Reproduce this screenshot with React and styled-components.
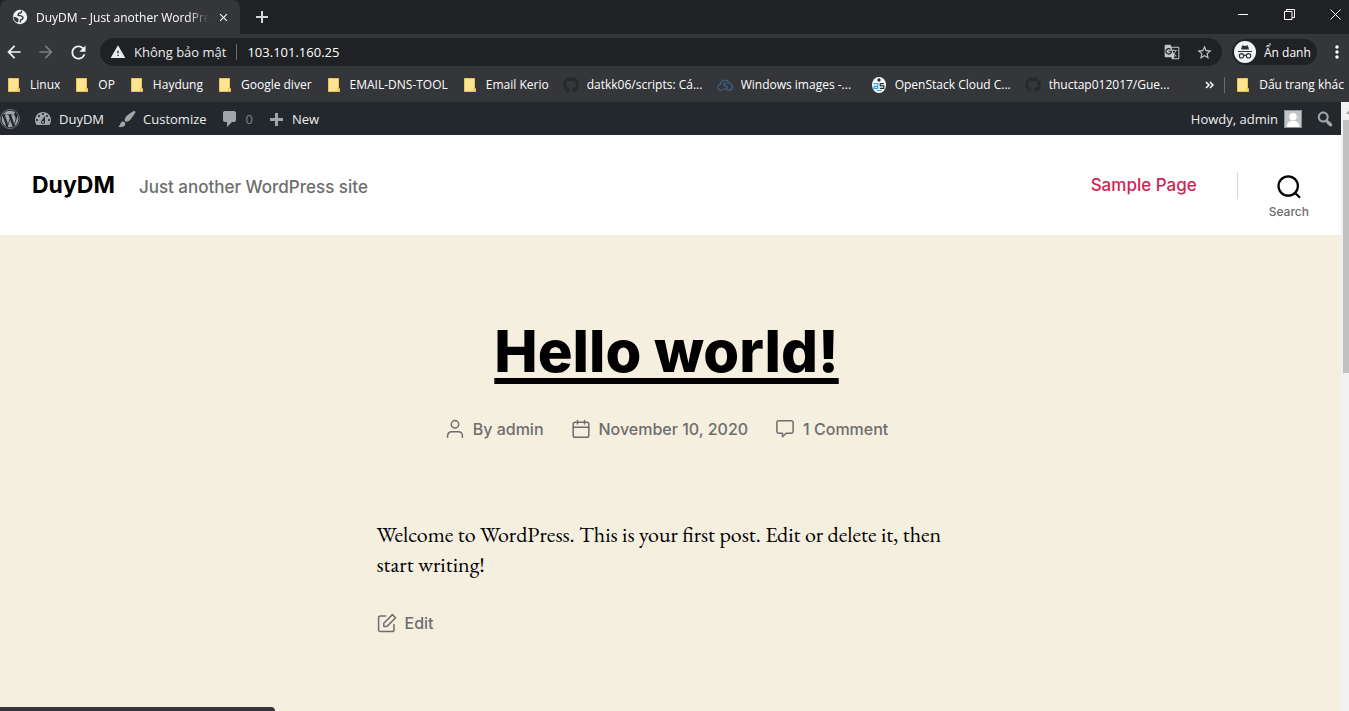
import React from "react";
import styled, { createGlobalStyle } from "styled-components";
import { FaGithub, FaWordpress } from "react-icons/fa";
import { MdArrowBack, MdArrowForward, MdRefresh, MdWarning, MdStarBorder, MdGTranslate, MdMoreVert, MdClose } from "react-icons/md";

const uiFont = '"Open Sans", "Noto Sans", sans-serif';
const themeFont = 'Inter, "Liberation Sans", sans-serif';

const GlobalStyle = createGlobalStyle`
  *, *::before, *::after { box-sizing: border-box; }
  body { margin: 0; background: #f5efe0; font-family: ${uiFont}; }
  button { font: inherit; color: inherit; background: none; border: 0; padding: 0; margin: 0; cursor: pointer; }
  a { color: inherit; text-decoration: none; }
  h1, h2, p, ul { margin: 0; padding: 0; }
  ul { list-style: none; }
  svg { display: block; flex: none; }
`;

const Window = styled.div`
  display: flex;
  flex-direction: column;
  height: 100vh;
  overflow: hidden;
  position: relative;
`;

/* ---------- browser chrome ---------- */

const TabStrip = styled.div`
  display: flex;
  flex: none;
  height: 34px;
  background: #202124;
  color: #fff;
`;

const Tab = styled.div`
  display: flex;
  align-items: center;
  width: 240px;
  padding: 0 10px 0 12px;
  gap: 8px;
  background: #35363a;
  border-radius: 8px 8px 0 0;
  font-size: 12px;
`;

const TabTitle = styled.span`
  flex: 1;
  min-width: 0;
  overflow: hidden;
  white-space: nowrap;
  mask-image: linear-gradient(to right, #000 88%, transparent);
`;

const NewTab = styled.button`
  display: grid;
  place-items: center;
  width: 44px;
`;

const WindowControls = styled.div`
  display: flex;
  margin-left: auto;
  margin-right: -9px;
`;

const WindowButton = styled.button`
  display: grid;
  place-items: center;
  width: 46px;
  height: 29px;
`;

const Toolbar = styled.div`
  display: flex;
  flex: none;
  align-items: center;
  height: 36px;
  padding: 0 2px 0 4px;
  background: #35363a;
  color: #fff;
`;

const NavButton = styled.button`
  display: grid;
  place-items: center;
  width: 20px;
  height: 28px;
  margin-right: 12px;
  color: ${(p) => (p.$dim ? "#7c7d80" : "#f1f3f4")};
`;

const AddressBar = styled.div`
  display: flex;
  flex: 1;
  align-items: center;
  height: 28px;
  padding: 0 9px 0 10px;
  border-radius: 14px;
  background: #202124;
  font-size: 13px;
`;

const Security = styled.button`
  display: flex;
  align-items: center;
  gap: 8px;
  padding-right: 10px;
  border-right: 1px solid #6b6c6f;
  line-height: 16px;
  color: #e8eaed;
  white-space: nowrap;
`;

const Address = styled.input`
  flex: 1;
  min-width: 0;
  border: 0;
  outline: 0;
  padding: 0 10px;
  background: transparent;
  color: #fff;
  font: inherit;
`;

const AddressAction = styled.button`
  margin-left: 16px;
  color: #c4c5c8;
`;

const Profile = styled.button`
  display: flex;
  align-items: center;
  gap: 8px;
  width: 85px;
  height: 26px;
  margin: 0 10px;
  padding: 0 2px;
  border-radius: 13px;
  background: #202124;
  font-size: 12px;
  white-space: nowrap;
`;

const Bookmarks = styled.nav`
  display: flex;
  flex: none;
  align-items: center;
  height: 32px;
  padding: 0 5px 3px 6px;
  background: #35363a;
  color: #fff;
  font-size: 12px;
  line-height: 16px;
`;

const BookmarkLink = styled.a`
  display: flex;
  flex: none;
  align-items: center;
  gap: 8px;
  width: ${(p) => (p.$clipped ? "154px" : "auto")};
  padding-right: ${(p) => (p.$last || p.$clipped ? "0" : "14px")};
  white-space: nowrap;
`;

const BookmarkText = styled.span`
  overflow: hidden;
  text-overflow: ellipsis;
`;

const Overflow = styled.button`
  margin-left: auto;
  margin-right: 10px;
`;

const OtherBookmarks = styled.div`
  display: flex;
  padding-left: 10px;
  border-left: 1px solid #6b6c6f;
`;

/* ---------- web page ---------- */

const Viewport = styled.div`
  display: flex;
  flex: 1;
  min-height: 0;
`;

const Site = styled.div`
  display: flex;
  flex: 1;
  flex-direction: column;
  min-width: 0;
`;

const AdminBar = styled.nav`
  display: flex;
  flex: none;
  align-items: center;
  height: 33px;
  padding-right: 6px;
  background: #23282d;
  color: #eee;
  font-size: 13px;
`;

const AdminLink = styled.a`
  display: flex;
  align-items: center;
  gap: 6px;
  margin-right: 13px;
  color: ${(p) => (p.$dim ? "#7d8287" : "#eee")};
  white-space: nowrap;
  svg { color: #a0a5aa; }
`;

const Account = styled(AdminLink)`
  margin-left: auto;
`;

const AdminSearch = styled.button`
  color: #a0a5aa;
`;

const SiteHeader = styled.header`
  display: flex;
  flex: none;
  align-items: center;
  height: 100px;
  padding: 0 32px;
  background: #fff;
  font-family: ${themeFont};
`;

const Brand = styled.div`
  display: flex;
  align-items: baseline;
  gap: 24px;
`;

const SiteTitle = styled.a`
  color: #000;
  font-size: 23px;
  font-weight: 700;
  line-height: 28px;
`;

const Tagline = styled.p`
  color: #6d6d6d;
  font-size: 17px;
  font-weight: 500;
`;

const MenuLink = styled.a`
  margin-left: auto;
  padding-right: 40px;
  color: #cd2653;
  font-size: 17px;
  font-weight: 500;
  line-height: 27px;
  border-right: 1px solid #dcd7ca;
`;

const SearchToggle = styled.button`
  display: flex;
  flex-direction: column;
  align-items: center;
  gap: 5px;
  margin-left: 31px;
  padding-top: 24px;
  color: #6d6d6d;
  font-size: 12px;
  font-weight: 500;
  line-height: 16px;
  svg { color: #000; }
`;

const Post = styled.article`
  display: flex;
  flex: 1;
  flex-direction: column;
  align-items: center;
  min-height: 0;
  padding: 80px 8px 0 0;
  background: #f5efe0;
  font-family: ${themeFont};
`;

const PostTitle = styled.h2`
  color: #000;
  font-size: 58px;
  font-weight: 800;
  line-height: 72px;
  a {
    text-decoration: underline;
    text-decoration-thickness: 6px;
    text-underline-offset: 6px;
    text-decoration-skip-ink: none;
  }
`;

const PostMeta = styled.ul`
  display: flex;
  gap: 27px;
  margin-top: 30px;
`;

const MetaLink = styled.a`
  display: flex;
  align-items: center;
  gap: 8px;
  color: #6d6d6d;
  font-size: 16px;
  font-weight: 500;
  line-height: 24px;
`;

const Entry = styled.div`
  width: 100%;
  max-width: 580px;
  margin-top: 79px;
`;

const EntryText = styled.p`
  color: #000;
  font-family: "EB Garamond", Garamond, "Liberation Serif", serif;
  font-size: 22px;
  line-height: 30px;
`;

const EditLink = styled(MetaLink)`
  margin-top: 31px;
`;

const ScrollTrack = styled.div`
  flex: none;
  width: 8px;
  padding-left: 2px;
  overflow: hidden;
  background: #f1f1f1;
  svg { margin: 7px 0 6px 3px; }
`;

const ScrollThumb = styled.div`
  height: 253px;
  background: #c1c1c1;
`;

const StatusBubble = styled.div`
  position: absolute;
  left: 0;
  bottom: 0;
  width: 275px;
  height: 4px;
  border-radius: 0 4px 0 0;
  background: #35363a;
`;

/* ---------- icons ---------- */

const Dashicon = ({ d, size = 20 }) => (
  <svg width={size} height={size} viewBox="0 0 20 20" fill="currentColor" fillRule="evenodd" aria-hidden="true">
    <path d={d} />
  </svg>
);

const dash = {
  gauge:
    "M3.76 16h12.48c1.1-1.37 1.76-3.11 1.76-5 0-4.42-3.58-8-8-8s-8 3.58-8 8c0 1.89.66 3.63 1.76 5zM10 4c.55 0 1 .45 1 1s-.45 1-1 1-1-.45-1-1 .45-1 1-1zM6 6c.55 0 1 .45 1 1s-.45 1-1 1-1-.45-1-1 .45-1 1-1zm8 0c.55 0 1 .45 1 1s-.45 1-1 1-1-.45-1-1 .45-1 1-1zm-5.370 5.550L12 7v6c0 1.100-.9 2-2 2s-2-.9-2-2c0-.57.24-1.080.63-1.450zM4 10c.55 0 1 .45 1 1s-.45 1-1 1-1-.45-1-1 .45-1 1-1zm12 0c.55 0 1 .45 1 1s-.45 1-1 1-1-.45-1-1 .45-1 1-1zm-5 3c0-.55-.45-1-1-1s-1 .45-1 1 .45 1 1 1 1-.45 1-1z",
  brush:
    "M18.33 3.57s.27-.8-.31-1.36c-.53-.52-1.22-.24-1.22-.24-.61.3-5.76 3.47-7.67 5.57-.86.96-2.06 3.79-1.09 4.82.92.98 3.96-.17 4.79-1 2.06-2.06 5.21-7.17 5.5-7.79zM1.4 17.65c2.37-1.56 1.46-3.41 3.23-4.64.93-.65 2.22-.62 3.08.29.63.67.8 2.57-.16 3.46-1.57 1.45-4 1.55-6.15.89z",
  comment: "M5 2h9c1.1 0 2 .9 2 2v7c0 1.1-.9 2-2 2h-2l-5 5v-5H5c-1.1 0-2-.9-2-2V4c0-1.1.9-2 2-2z",
  plus: "M17 9v3h-5v5H9v-5H4V9h5V4h3v5z",
  search:
    "M12.14 4.18c1.87 1.87 2.11 4.75.72 6.89.12.1.22.21.36.31.2.16.47.36.81.59.34.24.56.39.66.47.42.31.73.57.94.78.32.32.6.65.84 1 .25.35.44.69.59 1.04.14.35.21.68.18 1-.02.32-.14.59-.36.81s-.49.34-.81.36c-.31.02-.65-.04-.99-.19-.35-.14-.7-.34-1.04-.59-.35-.24-.68-.52-1-.84-.21-.21-.47-.52-.77-.93-.1-.13-.25-.35-.47-.66-.22-.32-.4-.57-.56-.78-.16-.2-.29-.35-.44-.5-2.07 1.09-4.69.76-6.44-.98-2.14-2.15-2.14-5.64 0-7.78 2.15-2.15 5.63-2.15 7.78 0zm-1.41 6.36c1.36-1.37 1.36-3.58 0-4.95-1.37-1.37-3.59-1.37-4.95 0-1.37 1.37-1.37 3.58 0 4.95 1.36 1.37 3.58 1.37 4.95 0z",
};

const LineIcon = ({ children }) => (
  <svg width="20" height="20" viewBox="0 0 20 20" fill="none" stroke="currentColor" strokeWidth="1.5" strokeLinecap="round" strokeLinejoin="round" aria-hidden="true">
    {children}
  </svg>
);

const UserIcon = () => (
  <LineIcon>
    <circle cx="10" cy="5.3" r="3.7" />
    <path d="M2.6 18.3v-1.6a4 4 0 0 1 4-4h6.8a4 4 0 0 1 4 4v1.6" />
  </LineIcon>
);

const CalendarIcon = () => (
  <LineIcon>
    <rect x="2.2" y="3.2" width="15.6" height="15" rx="1.8" />
    <path d="M2.2 8.2h15.6M6.5 1.5v3.4M13.5 1.5v3.4" />
  </LineIcon>
);

const CommentIcon = () => (
  <LineIcon>
    <path d="M3.6 1.8h12.8a1.7 1.7 0 0 1 1.7 1.7v9a1.7 1.7 0 0 1-1.7 1.7h-5.2l-3.7 3.6v-3.6H3.6a1.7 1.7 0 0 1-1.7-1.7v-9a1.7 1.7 0 0 1 1.7-1.7z" />
  </LineIcon>
);

const EditIcon = () => (
  <LineIcon>
    <path d="M8.6 2.9H3.4a1.8 1.8 0 0 0-1.8 1.8v12a1.8 1.8 0 0 0 1.8 1.8h11.8a1.8 1.8 0 0 0 1.8-1.8v-5.2" />
    <path d="M15.4 1.6 6.8 10.2v3.2h3.2l8.6-8.6z" />
  </LineIcon>
);

const GlobeIcon = () => (
  <svg width="16" height="16" viewBox="0 0 16 16" aria-hidden="true">
    <circle cx="8" cy="8" r="7.2" fill="#f1f3f4" />
    <path d="M9.800 1.800 9 3.600 6.600 4.500 6.200 6.500l3 .3 1.900 1.700-.7 1.700-1.600.6-.7 2.600" fill="none" stroke="#35363a" strokeWidth="1.400" />
    <path d="m1.600 7.400 3.600 1.400 1.300 1.500-.1 2.200-1 .9A6.200 6.200 0 0 1 1.600 7.400z" fill="#35363a" />
  </svg>
);

const FolderIcon = () => (
  <svg width="16" height="16" viewBox="0 0 16 16" aria-hidden="true">
    <path d="M2.5 1.5h10v10h1v3h-11z" fill="#ffe592" stroke="#edc44c" />
    <path d="M11.5 14v-3H13" fill="none" stroke="#edc44c" />
  </svg>
);

const CloudIcon = () => (
  <svg width="16" height="16" viewBox="0 0 16 16" fill="none" stroke="#40658a" strokeWidth="1.2" aria-hidden="true">
    <path d="M5 13.200H3.700a3 3 0 0 1-.5-5.900A4.600 4.600 0 0 1 12 6a3.700 3.700 0 0 1 .7 7.200H10" />
    <path d="M10 6.300C8.800 5.500 6.500 5.900 6.500 7.400c0 1.800 3.800 1.200 3.800 3.200 0 1.700-2.500 2.200-4.100 1.200" />
  </svg>
);

const CloudComputingIcon = () => (
  <svg width="16" height="16" viewBox="0 0 16 16" aria-hidden="true">
    <ellipse cx="8" cy="8" rx="7" ry="8" fill="#fff" />
    <circle cx="8" cy="3" r="1.700" fill="#1d2a33" />
    <path d="M2.500 6.700h4.300v4.600H3v-2h3.500" fill="none" stroke="#27a4dd" strokeWidth="1.200" />
    <path d="M13 6.700H9.200v2.200h3.600v2.400H8.800" fill="none" stroke="#22303a" strokeWidth="1.200" />
    <path d="M5.500 13.500h5" stroke="#27a4dd" />
  </svg>
);

const IncognitoIcon = () => (
  <svg width="22" height="22" viewBox="0 0 22 22" aria-hidden="true">
    <circle cx="11" cy="11" r="11" fill="#f1f3f4" />
    <path d="M7 8.600 8.100 4.500h1.400l1.500.5 1.500-.5h1.400L15 8.600z" fill="#303134" />
    <path d="M4 10.500h14M9.700 14.500q1.300-.8 2.600 0" fill="none" stroke="#303134" strokeWidth="1.200" />
    <circle cx="7.500" cy="14.800" r="2.200" fill="none" stroke="#303134" strokeWidth="1.200" />
    <circle cx="14.500" cy="14.800" r="2.200" fill="none" stroke="#303134" strokeWidth="1.200" />
  </svg>
);

const PlusIcon = () => (
  <svg width="12" height="12" viewBox="0 0 12 12" stroke="#d5d6d8" strokeWidth="2" aria-hidden="true">
    <path d="M6 0v12M0 6h12" />
  </svg>
);

const WindowGlyph = ({ d }) => (
  <svg width="11" height="11" viewBox="0 0 11 11" fill="none" stroke="#fff" aria-hidden="true">
    <path d={d} />
  </svg>
);

const AvatarIcon = () => (
  <svg width="18" height="18" viewBox="0 0 18 18" aria-hidden="true">
    <rect x=".5" y=".5" width="17" height="17" fill="#c3c4c6" stroke="#8c8f94" />
    <circle cx="9" cy="6.800" r="3.700" fill="#fff" />
    <path d="M2.500 17c.3-4 2.300-5.500 4.500-6h4c2.200.5 4.200 2 4.500 6z" fill="#fff" />
  </svg>
);

const SearchIcon = () => (
  <svg width="24" height="24" viewBox="0 0 24 24" fill="none" stroke="currentColor" strokeWidth="2.200" aria-hidden="true">
    <circle cx="11.200" cy="11" r="9.700" />
    <path d="m17.700 17.500 5.300 5.300" />
  </svg>
);

/* ---------- content ---------- */

const bookmarkIcons = {
  folder: <FolderIcon />,
  github: <FaGithub size={16} color="#24292e" />,
  cloud: <CloudIcon />,
  computing: <CloudComputingIcon />,
};

const bookmarks = [
  { text: "Linux", icon: "folder" },
  { text: "OP", icon: "folder" },
  { text: "Haydung", icon: "folder" },
  { text: "Google diver", icon: "folder" },
  { text: "EMAIL-DNS-TOOL", icon: "folder" },
  { text: "Email Kerio", icon: "folder" },
  { text: "datkk06/scripts: Cá...", icon: "github", clipped: true },
  { text: "Windows images -...", icon: "cloud", clipped: true },
  { text: "OpenStack Cloud C...", icon: "computing", clipped: true },
  { text: "thuctap012017/Gue...", icon: "github", clipped: true },
];

const Bookmark = ({ text, icon, clipped, last }) => (
  <BookmarkLink href="#" $clipped={clipped} $last={last}>
    {bookmarkIcons[icon]}
    <BookmarkText>{text}</BookmarkText>
  </BookmarkLink>
);

export default function App() {
  return (
    <Window>
      <GlobalStyle />
      <TabStrip>
        <Tab>
          <GlobeIcon />
          <TabTitle>DuyDM – Just another WordPress</TabTitle>
          <button aria-label="Close tab"><MdClose size={13} /></button>
        </Tab>
        <NewTab aria-label="New tab"><PlusIcon /></NewTab>
        <WindowControls>
          <WindowButton aria-label="Minimize"><WindowGlyph d="M0 5.5h10" /></WindowButton>
          <WindowButton aria-label="Restore"><WindowGlyph d="M.5 2.5h7.500v8H.5zM2.500 2.500v-2h8v8H8" /></WindowButton>
          <WindowButton aria-label="Close"><WindowGlyph d="m.5.5 10 10m0-10-10 10" /></WindowButton>
        </WindowControls>
      </TabStrip>

      <Toolbar>
        <NavButton aria-label="Back"><MdArrowBack size={20} /></NavButton>
        <NavButton aria-label="Forward" $dim><MdArrowForward size={20} /></NavButton>
        <NavButton aria-label="Reload"><MdRefresh size={21} /></NavButton>
        <AddressBar>
          <Security><MdWarning size={16} />Không bảo mật</Security>
          <Address aria-label="Address" defaultValue="103.101.160.25" />
          <AddressAction aria-label="Translate"><MdGTranslate size={16} /></AddressAction>
          <AddressAction aria-label="Bookmark this page"><MdStarBorder size={17} /></AddressAction>
        </AddressBar>
        <Profile><IncognitoIcon />Ẩn danh</Profile>
        <button aria-label="Menu"><MdMoreVert size={20} /></button>
      </Toolbar>

      <Bookmarks aria-label="Bookmarks">
        {bookmarks.map((b) => <Bookmark key={b.text} {...b} />)}
        <Overflow aria-label="More bookmarks">
          <svg width="9" height="8" viewBox="0 0 9 8" fill="none" stroke="#fff" strokeWidth="1.5">
            <path d="m1 1 3 3-3 3M5 1l3 3-3 3" />
          </svg>
        </Overflow>
        <OtherBookmarks><Bookmark text="Dấu trang khác" icon="folder" last /></OtherBookmarks>
      </Bookmarks>

      <Viewport>
        <Site>
          <AdminBar aria-label="Admin toolbar">
            <AdminLink href="#" aria-label="About WordPress"><FaWordpress size={20} /></AdminLink>
            <AdminLink href="#"><Dashicon d={dash.gauge} />DuyDM</AdminLink>
            <AdminLink href="#"><Dashicon d={dash.brush} />Customize</AdminLink>
            <AdminLink href="#" $dim><Dashicon d={dash.comment} />0</AdminLink>
            <AdminLink href="#"><Dashicon d={dash.plus} />New</AdminLink>
            <Account href="#">Howdy, admin<AvatarIcon /></Account>
            <AdminSearch aria-label="Search"><Dashicon d={dash.search} /></AdminSearch>
          </AdminBar>

          <SiteHeader>
            <Brand>
              <SiteTitle href="#">DuyDM</SiteTitle>
              <Tagline>Just another WordPress site</Tagline>
            </Brand>
            <MenuLink href="#">Sample Page</MenuLink>
            <SearchToggle><SearchIcon />Search</SearchToggle>
          </SiteHeader>

          <Post>
            <PostTitle><a href="#">Hello world!</a></PostTitle>
            <PostMeta>
              <li><MetaLink href="#"><UserIcon />By admin</MetaLink></li>
              <li><MetaLink href="#"><CalendarIcon />November 10, 2020</MetaLink></li>
              <li><MetaLink href="#"><CommentIcon />1 Comment</MetaLink></li>
            </PostMeta>
            <Entry>
              <EntryText>
                Welcome to WordPress. This is your first post. Edit or delete it, then start writing!
              </EntryText>
              <EditLink href="#"><EditIcon />Edit</EditLink>
            </Entry>
          </Post>
        </Site>
        <ScrollTrack aria-hidden="true">
          <svg width="8" height="5" viewBox="0 0 8 5"><path d="M0 5 4 0l4 5z" fill="#a3a3a3" /></svg>
          <ScrollThumb />
        </ScrollTrack>
      </Viewport>
      <StatusBubble />
    </Window>
  );
}
